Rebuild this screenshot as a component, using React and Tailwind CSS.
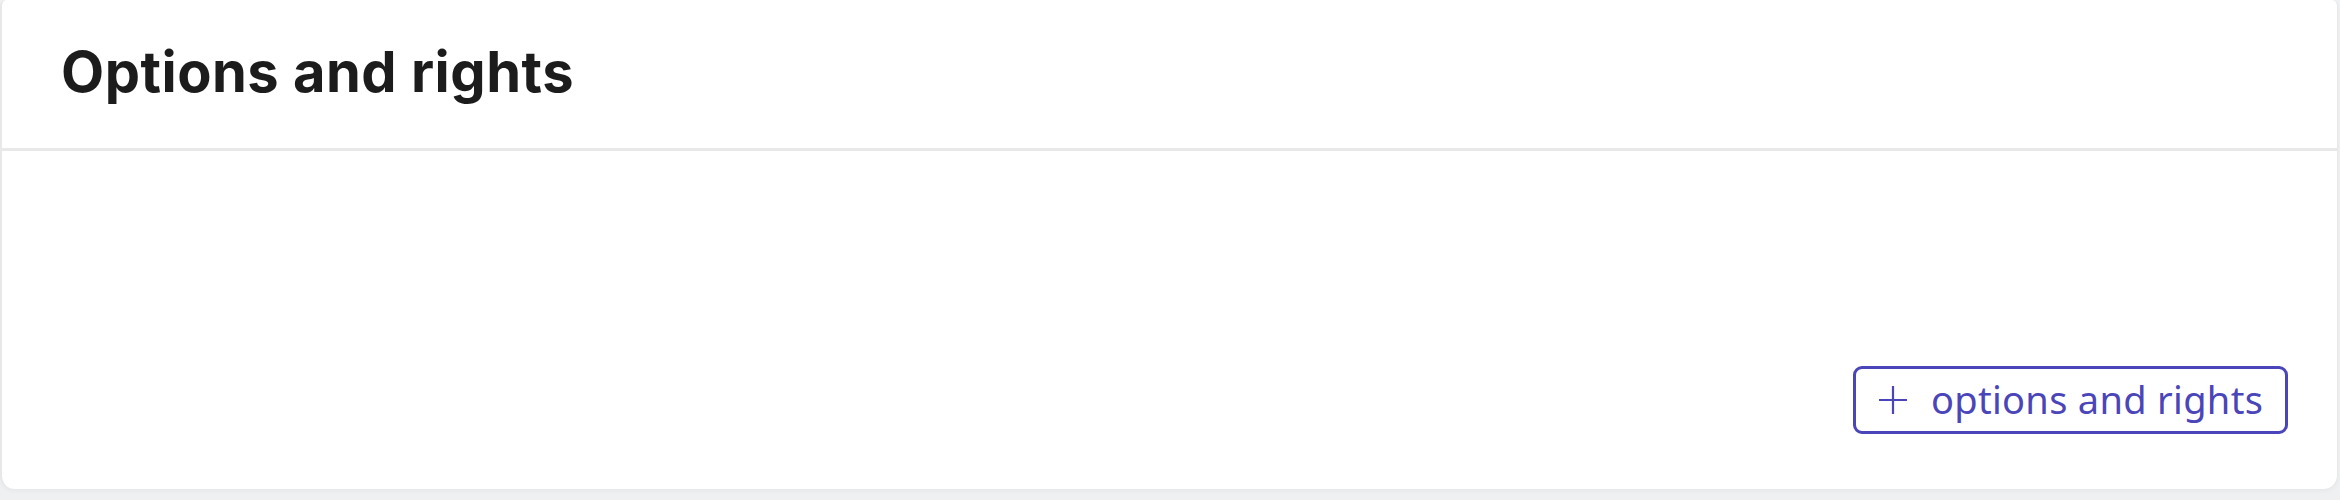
export default function App() {
  return (
    <div className="w-[2340px] h-[500px] bg-[#eef0f2]">
      <div className="w-[2338px] h-[489px] bg-white rounded-t-[6px] rounded-b-[14px] border-l-2 border-r border-[#e8e8e8] shadow-[0_2px_4px_rgba(0,0,0,0.04)] flex flex-col">
        <div className="h-[151px] flex items-center px-[59px] pb-[4px] border-b-[3px] border-[#e8e8e8] shrink-0">
          <h2
            className="text-[#1c1c1c] text-[56px] font-bold leading-none tracking-[0.5px]"
            style={{ fontFamily: 'Inter, "Liberation Sans", sans-serif' }}
          >
            Options and rights
          </h2>
        </div>
        <div className="flex-1 flex items-end justify-end pr-[49px] pb-[55px]">
          <button
            className="w-[435px] h-[68px] flex items-center gap-[22px] pl-[21px] pb-[2px] border-[3px] border-[#4a45b8] rounded-[9px] text-[#4a45b8] text-[38px] leading-none tracking-[0.3px]"
            style={{ fontFamily: '"Noto Sans", "Open Sans", sans-serif' }}
          >
            <svg width="32" height="32" viewBox="0 0 32 32" fill="none" stroke="currentColor" strokeWidth="2.2" className="mt-[2px]">
              <path d="M16 2v28M2 16h28" />
            </svg>
            <span>options and rights</span>
          </button>
        </div>
      </div>
    </div>
  )
}
